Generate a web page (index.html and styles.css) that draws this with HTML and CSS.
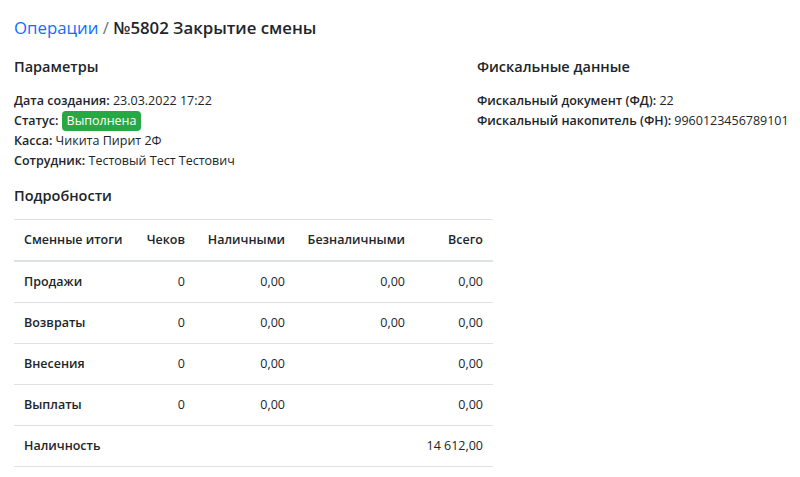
FILE: index.html
```html
<!DOCTYPE html>
<html lang="ru">
<head>
<meta charset="utf-8">
<link rel="stylesheet" href="styles.css">
</head>
<body>
<div class="page">
  <h1 class="title"><a class="crumb" href="#">Операции</a> <span class="sep">/</span> <span class="cur">№5802 Закрытие смены</span></h1>
  <div class="info">
    <section>
      <h2 class="sub">Параметры</h2>
      <div class="line"><b>Дата создания:</b> 23.03.2022 17:22</div>
      <div class="line"><b>Статус:</b> <span class="badge">Выполнена</span></div>
      <div class="line"><b>Касса:</b> Чикита Пирит 2Ф</div>
      <div class="line"><b>Сотрудник:</b> Тестовый Тест Тестович</div>
    </section>
    <section>
      <h2 class="sub">Фискальные данные</h2>
      <div class="line"><b>Фискальный документ (ФД):</b> 22</div>
      <div class="line"><b>Фискальный накопитель (ФН):</b> 9960123456789101</div>
    </section>
  </div>
  <h2 class="sub details">Подробности</h2>
  <table class="totals">
    <colgroup>
      <col class="c1"><col class="c2"><col class="c3"><col class="c4"><col class="c5">
    </colgroup>
    <thead>
      <tr><th class="l">Сменные итоги</th><th>Чеков</th><th>Наличными</th><th>Безналичными</th><th>Всего</th></tr>
    </thead>
    <tbody>
      <tr><td class="l">Продажи</td><td>0</td><td>0,00</td><td>0,00</td><td>0,00</td></tr>
      <tr><td class="l">Возвраты</td><td>0</td><td>0,00</td><td>0,00</td><td>0,00</td></tr>
      <tr><td class="l">Внесения</td><td>0</td><td>0,00</td><td></td><td>0,00</td></tr>
      <tr><td class="l">Выплаты</td><td>0</td><td>0,00</td><td></td><td>0,00</td></tr>
      <tr><td class="l">Наличность</td><td></td><td></td><td></td><td>14&nbsp;612,00</td></tr>
    </tbody>
  </table>
</div>
</body>
</html>
```
FILE: styles.css
```css
* { box-sizing: border-box; }
html, body { margin: 0; padding: 0; background: #fff; }
body {
  font-family: "Open Sans", "Noto Sans", sans-serif;
  font-size: 12.5px;
  line-height: 20px;
  color: #212529;
}
.page { padding: 16px 14px 0; }
.title {
  margin: 0;
  font-size: 16.8px;
  line-height: 24px;
  font-weight: 600;
}
.crumb { color: #0d6efd; text-decoration: none; font-weight: 400; }
.sep { color: #6c757d; font-weight: 400; }
.info {
  display: grid;
  grid-template-columns: 463px 1fr;
  margin-top: 17px;
}
.line { white-space: nowrap; }
.sub {
  margin: 0 0 14px;
  font-size: 14.5px;
  line-height: 20px;
  font-weight: 600;
}
.line b { font-weight: 600; }
.badge {
  display: inline-block;
  background: #28a745;
  color: #fff;
  border-radius: 4px;
  padding: 0 5px;
  line-height: 20px;
}
.details { margin-top: 15px; margin-bottom: 13px; }
.totals {
  width: 479px;
  border-collapse: collapse;
  table-layout: fixed;
  border-top: 1px solid #dee2e6;
}
.c1 { width: 121px; }
.c2 { width: 60px; }
.c3 { width: 100px; }
.c4 { width: 120px; }
.c5 { width: 78px; }
.totals th, .totals td {
  padding: 10px;
  text-align: right;
  white-space: nowrap;
  border-bottom: 1px solid #dee2e6;
}
.totals th { font-weight: 600; }
.totals thead th { border-bottom: 2px solid #dee2e6; }
.totals .l { text-align: left; }
.totals td.l { font-weight: 600; }
```
